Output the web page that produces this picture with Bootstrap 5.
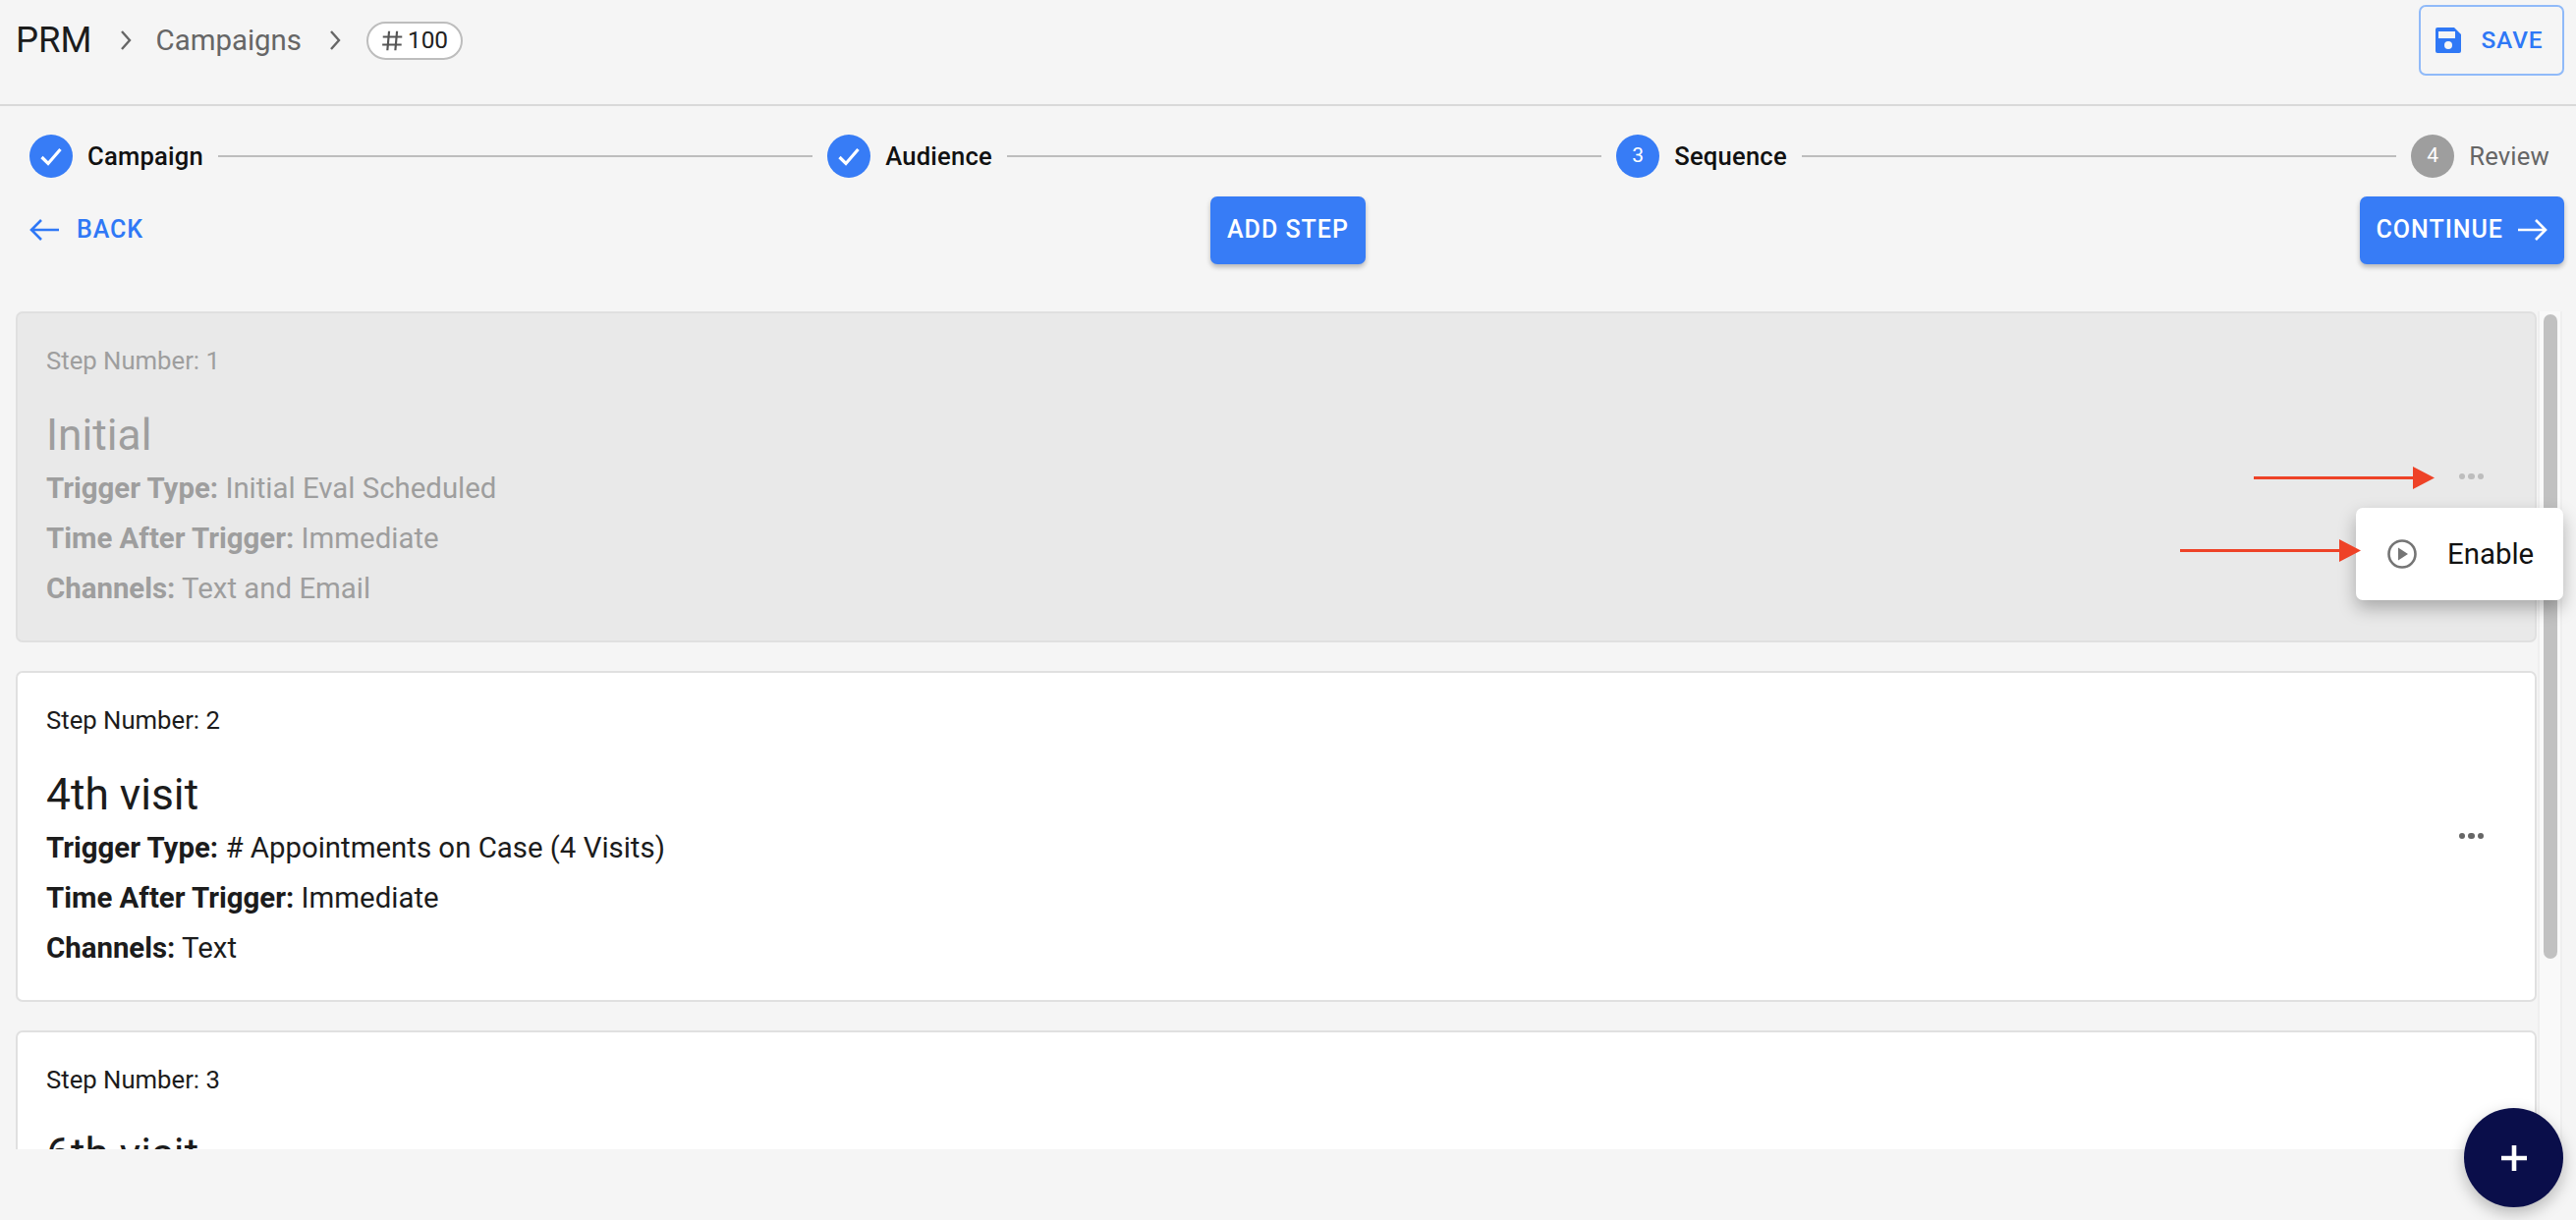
<!DOCTYPE html>
<html lang="en">
<head>
<meta charset="utf-8">
<title>PRM Campaign Sequence</title>
<link href="https://cdn.jsdelivr.net/npm/bootstrap@5.3.0/dist/css/bootstrap.min.css" rel="stylesheet">
<style>
html,body{height:100%;}
body{background:#f5f5f5;font-family:Roboto,"Liberation Sans",sans-serif;color:#1c1c1c;overflow:hidden;position:relative;width:2622px;height:1242px;}
.top-bar{height:108px;border-bottom:2px solid #d9d9d9;padding:5px 12px 0 16px;}
.crumb-root{font-size:36.6px;line-height:40px;color:#1c1c1c;}
.crumb-link{font-size:29.4px;color:#666;margin-left:24px;}
.crumb-sep{margin-left:27px;color:#666;}
.crumb-chip{margin-left:25px;width:98px;height:39px;border:2px solid #bdbdbd;border-radius:20px;background:#fff;font-size:24.4px;color:#222;gap:4px;}
.save-btn{width:148px;height:72px;border:2px solid #90baf9;border-radius:7px;background:transparent;color:#2f78f6;font-size:24.4px;font-weight:500;letter-spacing:.9px;gap:19px;padding:0 5px 0 0;margin-top:0;}
.step-row{padding:11px 27px 0 30px;height:91px;gap:15px;}
.step-dot{width:44px;height:44px;border-radius:50%;background:#377cf6;color:#fff;font-size:21px;flex:none;}
.step-dot-off{background:#9e9e9e;}
.step-name{font-size:25.6px;font-weight:500;color:#111;line-height:44px;white-space:nowrap;letter-spacing:.2px;}
.step-name-off{font-weight:400;color:#666;}
.step-line{flex:1 1 0;height:2px;background:#bdbdbd;}
.action-row{display:grid;grid-template-columns:1fr auto 1fr;padding:0 12px;height:70px;align-items:center;}
.back-link{color:#2f78f6;font-size:25px;font-weight:500;letter-spacing:.9px;gap:18px;background:none;border:0;padding:0;margin-left:18px;}
.solid-btn{background:#377cf6;color:#fff;border:0;border-radius:7px;height:69px;font-size:25px;font-weight:500;letter-spacing:1px;box-shadow:0 3px 5px rgba(0,0,0,.25);padding:0 17px;gap:15px;}
.scroll-zone{margin:48px 14px 0 16px;height:853px;overflow:hidden;}
.step-list{flex:1 1 0;gap:29px;min-width:0;}
.step-card{height:337px;flex:none;border:2px solid #e0e0e0;border-radius:7px;background:#fff;padding:0 29px;color:#1c1c1c;}
.step-card-off{background:#e9e9e9;color:#9e9e9e;border-color:#e0e0e0;}
.step-num{font-size:25.7px;line-height:32px;padding-top:32px;}
.step-title{font-size:44.3px;line-height:54px;margin-top:33px;}
.step-line-text{font-size:29.4px;line-height:50.8px;}
.step-line-first{margin-top:2px;}
.step-line-text b{font-weight:700;}
.dots{gap:3px;margin-right:23px;margin-top:-1px;}
.dots span{width:6.500px;height:6.500px;border-radius:50%;background:#666;}
.step-card-off .dots span{background:#bdbdbd;}
.track{width:25px;margin-left:1px;background:#f9f9f9;border-left:2px solid #efefef;border-right:2px solid #efefef;padding:3px 4px 0;flex:none;}
.thumb{height:656px;width:14px;border-radius:7px;background:#c1c1c1;}
.pop-menu{position:absolute;left:2398px;top:517px;width:211px;height:94px;background:#fff;border-radius:7px;box-shadow:0 8px 18px rgba(0,0,0,.28);padding-left:32px;gap:31px;font-size:29.4px;color:#111;z-index:5;}
.fab{position:absolute;left:2508px;top:1128px;width:101px;height:101px;border-radius:50%;background:#0a0e4a;border:0;padding:0;box-shadow:0 6px 16px rgba(0,0,0,.25);z-index:6;}
.note-arrow{position:absolute;z-index:7;}
</style>
</head>
<body>
<header class="top-bar d-flex align-items-start justify-content-between">
  <nav class="d-flex align-items-center" style="height:72px">
    <span class="crumb-root">PRM</span>
    <svg class="crumb-sep" width="14" height="22" viewBox="0 0 14 22"><path d="M3 2l8 9-8 9" fill="none" stroke="#666" stroke-width="2.4"/></svg>
    <span class="crumb-link">Campaigns</span>
    <svg class="crumb-sep" width="14" height="22" viewBox="0 0 14 22"><path d="M3 2l8 9-8 9" fill="none" stroke="#666" stroke-width="2.4"/></svg>
    <span class="crumb-chip d-inline-flex align-items-center justify-content-center">
      <svg width="23" height="23" viewBox="0 0 20 20"><path d="M7 1.500L5.500 18.500M14 1.500L12.500 18.500M1.500 6.500H18.500M1 13.500H18" fill="none" stroke="#555" stroke-width="1.900"/></svg>
      <span>100</span>
    </span>
  </nav>
  <button class="btn save-btn d-inline-flex align-items-center justify-content-center" type="button">
    <svg width="28" height="28" viewBox="0 0 28 28"><path d="M3 1h17l7 7v17a2 2 0 0 1-2 2H3a2 2 0 0 1-2-2V3a2 2 0 0 1 2-2z" fill="#2f78f6"/><rect x="4" y="5" width="17" height="7" fill="#f5f5f5"/><circle cx="14" cy="19" r="4" fill="#f5f5f5"/></svg>
    <span>SAVE</span>
  </button>
</header>

<div class="step-row d-flex align-items-center">
  <span class="step-dot d-flex align-items-center justify-content-center"><svg width="26" height="26" viewBox="0 0 26 26"><path d="M3.500 14l6.500 6.500L22.500 6" fill="none" stroke="#fff" stroke-width="3.200"/></svg></span>
  <span class="step-name">Campaign</span>
  <span class="step-line"></span>
  <span class="step-dot d-flex align-items-center justify-content-center"><svg width="26" height="26" viewBox="0 0 26 26"><path d="M3.500 14l6.500 6.500L22.500 6" fill="none" stroke="#fff" stroke-width="3.200"/></svg></span>
  <span class="step-name">Audience</span>
  <span class="step-line"></span>
  <span class="step-dot d-flex align-items-center justify-content-center">3</span>
  <span class="step-name">Sequence</span>
  <span class="step-line"></span>
  <span class="step-dot step-dot-off d-flex align-items-center justify-content-center">4</span>
  <span class="step-name step-name-off">Review</span>
</div>

<div class="action-row">
  <div><button class="back-link btn d-inline-flex align-items-center" type="button">
    <svg width="30" height="22" viewBox="0 0 30 22"><path d="M30 11H2M12 1L2 11l10 10" fill="none" stroke="#2f78f6" stroke-width="2.600"/></svg>
    <span>BACK</span>
  </button></div>
  <button class="solid-btn btn" type="button">ADD STEP</button>
  <div class="text-end"><button class="solid-btn btn d-inline-flex align-items-center" type="button">
    <span>CONTINUE</span>
    <svg width="30" height="22" viewBox="0 0 30 22"><path d="M0 11h28M18 1l10 10-10 10" fill="none" stroke="#fff" stroke-width="2.600"/></svg>
  </button></div>
</div>

<main class="scroll-zone d-flex">
  <div class="step-list d-flex flex-column">
    <article class="step-card step-card-off d-flex align-items-center justify-content-between">
      <div class="align-self-start">
        <div class="step-num">Step Number: 1</div>
        <div class="step-title">Initial</div>
        <div class="step-line-text step-line-first"><b>Trigger Type:</b> Initial Eval Scheduled</div>
        <div class="step-line-text"><b>Time After Trigger:</b> Immediate</div>
        <div class="step-line-text"><b>Channels:</b> Text and Email</div>
      </div>
      <div class="dots d-flex"><span></span><span></span><span></span></div>
    </article>
    <article class="step-card d-flex align-items-center justify-content-between">
      <div class="align-self-start">
        <div class="step-num">Step Number: 2</div>
        <div class="step-title">4th visit</div>
        <div class="step-line-text step-line-first"><b>Trigger Type:</b> # Appointments on Case (4 Visits)</div>
        <div class="step-line-text"><b>Time After Trigger:</b> Immediate</div>
        <div class="step-line-text"><b>Channels:</b> Text</div>
      </div>
      <div class="dots d-flex"><span></span><span></span><span></span></div>
    </article>
    <article class="step-card d-flex align-items-center justify-content-between">
      <div class="align-self-start">
        <div class="step-num">Step Number: 3</div>
        <div class="step-title">6th visit</div>
      </div>
    </article>
  </div>
  <div class="track"><div class="thumb"></div></div>
</main>

<svg class="note-arrow" style="left:2294px;top:475px" width="184" height="24" viewBox="0 0 184 24"><path d="M0 10h162v-10l22 11.500-22 11.500v-10H0z" fill="#ee4227"/></svg>
<svg class="note-arrow" style="left:2219px;top:549px" width="184" height="24" viewBox="0 0 184 24"><path d="M0 10h162v-10l22 11.500-22 11.500v-10H0z" fill="#ee4227"/></svg>

<div class="pop-menu d-flex align-items-center">
  <svg width="30" height="30" viewBox="0 0 30 30"><circle cx="15" cy="15" r="13.500" fill="none" stroke="#757575" stroke-width="2.600"/><path d="M11 8.500v13l10-6.500z" fill="#757575"/></svg>
  <span>Enable</span>
</div>

<button class="fab d-flex align-items-center justify-content-center" type="button" aria-label="Add">
  <svg width="28" height="28" viewBox="0 0 28 28"><path d="M14 1v26M1 14h26" stroke="#fff" stroke-width="4.600" fill="none"/></svg>
</button>
<script src="https://cdn.jsdelivr.net/npm/bootstrap@5.3.0/dist/js/bootstrap.bundle.min.js"></script>
</body>
</html>
